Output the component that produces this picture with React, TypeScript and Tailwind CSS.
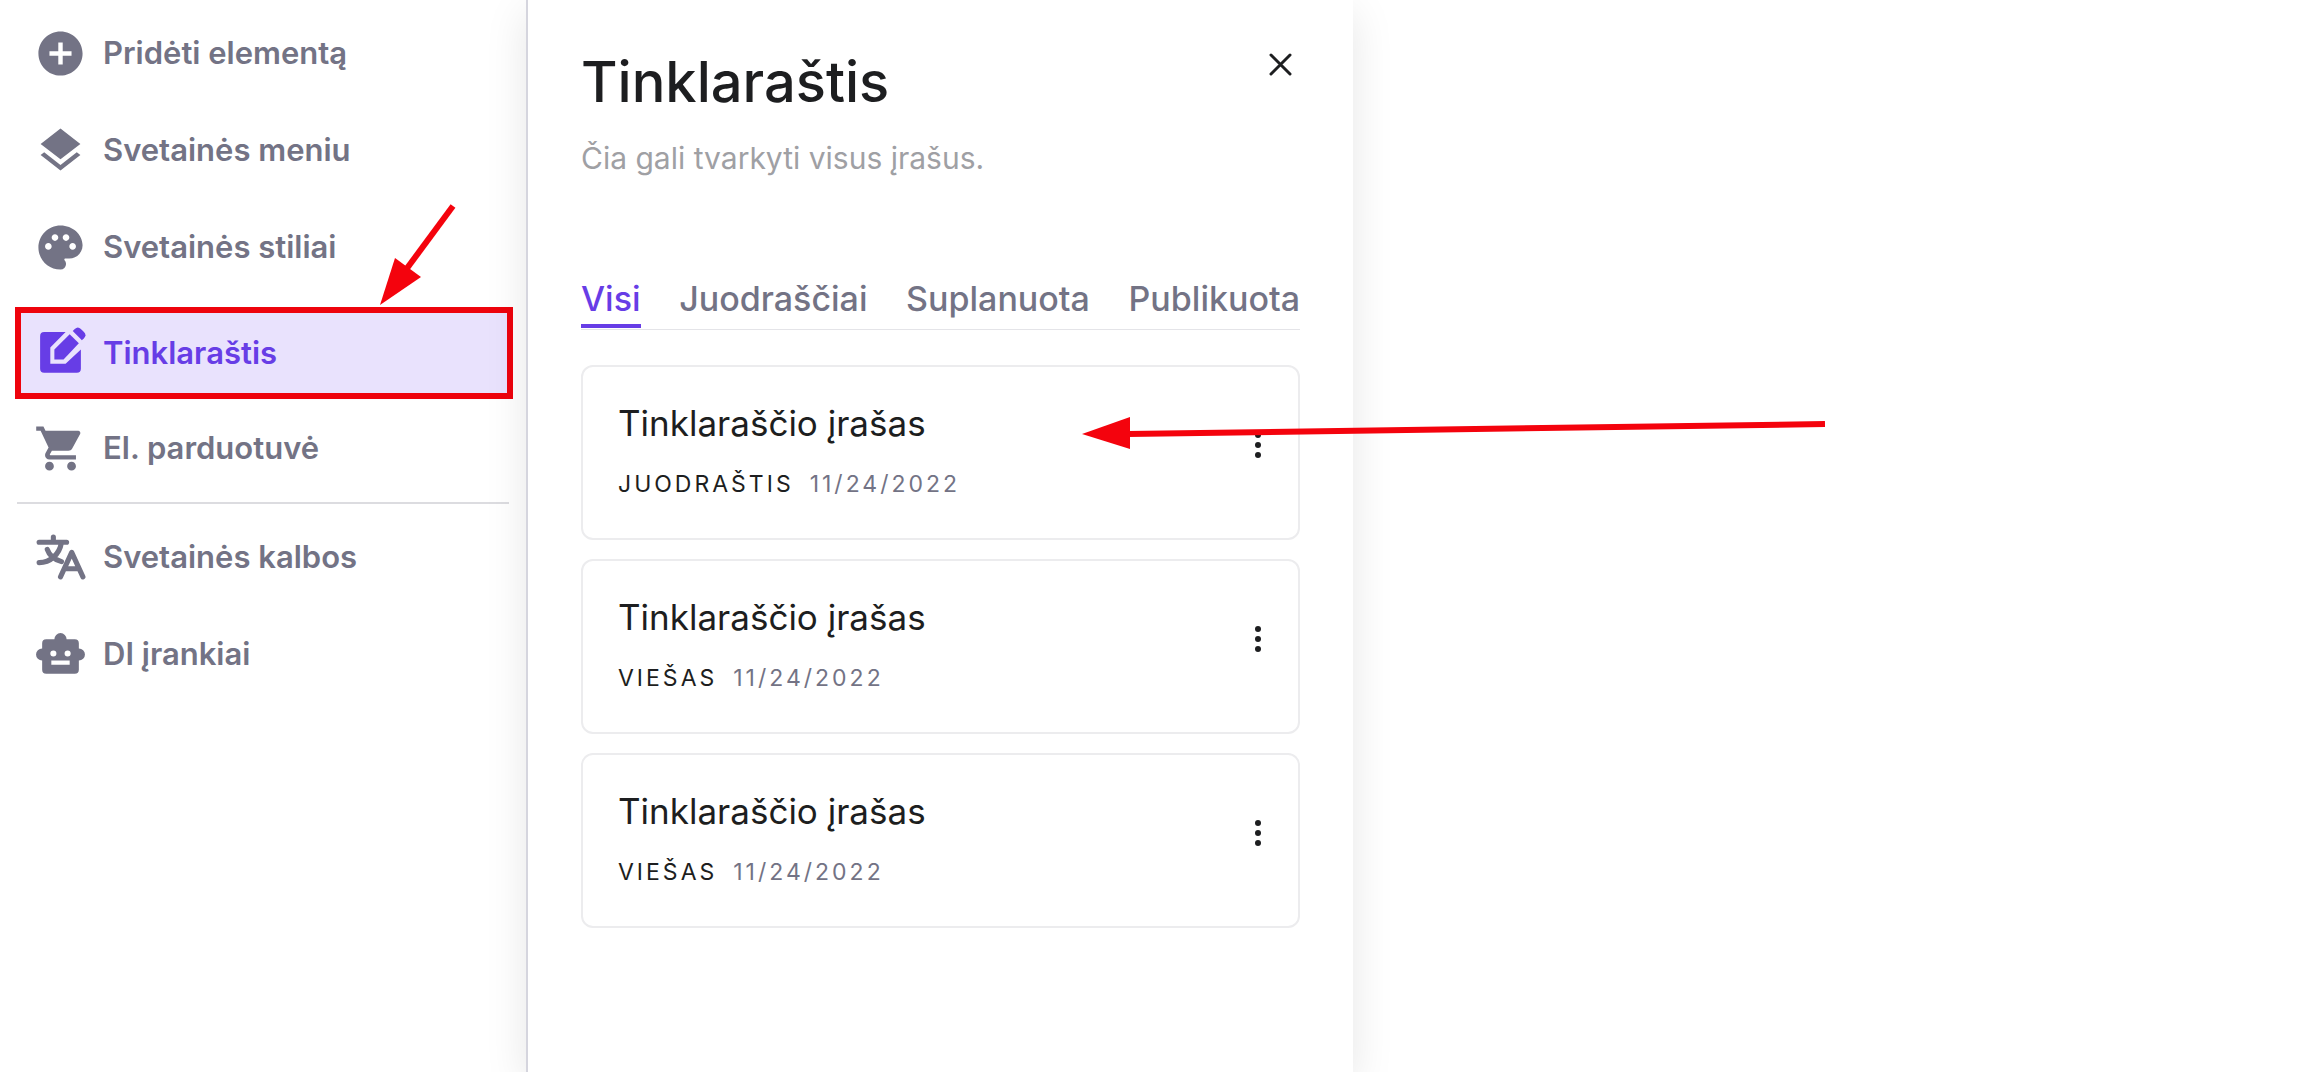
import type { ReactNode } from "react";
import { MdAddCircle, MdLayers, MdPalette, MdShoppingCart } from "react-icons/md";

const ICON = "size-[53px] shrink-0";

function EditSquareIcon() {
  return (
    <svg viewBox="0 0 52 52" className={ICON} aria-hidden="true">
      <path
        fill="currentColor"
        d="M10 5h21L16 20v16h15l15-14v19a4 4 0 0 1-4 4H10a4 4 0 0 1-4-4V9a4 4 0 0 1 4-4z"
      />
      <path fill="currentColor" d="M20 22 35 7l9 9-15 16h-9z" />
      <path fill="currentColor" d="m38 4 2-2q3-3 6 0l3 3q3 3 0 6l-2 2z" />
    </svg>
  );
}

function TranslateIcon() {
  return (
    <svg
      viewBox="0 0 52 52"
      className={ICON}
      fill="none"
      stroke="currentColor"
      strokeWidth="5"
      strokeLinecap="round"
      strokeLinejoin="round"
      aria-hidden="true"
    >
      <path d="M5 11h27M19 6v5M27 11c-2 12-11 20-22 20M13 18c2 6 7 10 14 12" />
      <path d="m26 45 11-24 11 24M30 37h14" />
    </svg>
  );
}

function RobotIcon() {
  return (
    <svg viewBox="0 0 52 52" className={ICON} aria-hidden="true">
      <path
        fill="currentColor"
        fillRule="evenodd"
        d="M20 11a6 6 0 0 1 12 0h8a4 4 0 0 1 4 4v5a6 6 0 0 1 0 12v9a4 4 0 0 1-4 4H12a4 4 0 0 1-4-4v-9a6 6 0 0 1 0-12v-5a4 4 0 0 1 4-4zM19 22a3 3 0 1 0 0 6 3 3 0 0 0 0-6zm14 0a3 3 0 1 0 0 6 3 3 0 0 0 0-6zM17 32v4h18v-4z"
      />
    </svg>
  );
}

const NAV_ITEMS: { label: string; icon: ReactNode }[] = [
  { label: "Pridėti elementą", icon: <MdAddCircle className={ICON} /> },
  { label: "Svetainės meniu", icon: <MdLayers className={ICON} /> },
  { label: "Svetainės stiliai", icon: <MdPalette className={ICON} /> },
  { label: "Tinklaraštis", icon: <EditSquareIcon /> },
  { label: "El. parduotuvė", icon: <MdShoppingCart className={ICON} /> },
];

const TOOL_ITEMS: { label: string; icon: ReactNode }[] = [
  { label: "Svetainės kalbos", icon: <TranslateIcon /> },
  { label: "DI įrankiai", icon: <RobotIcon /> },
];

const TABS = ["Visi", "Juodraščiai", "Suplanuota", "Publikuota"];

const POSTS = [
  { id: 1, title: "Tinklaraščio įrašas", status: "Juodraštis", date: "11/24/2022" },
  { id: 2, title: "Tinklaraščio įrašas", status: "Viešas", date: "11/24/2022" },
  { id: 3, title: "Tinklaraščio įrašas", status: "Viešas", date: "11/24/2022" },
];

function NavItem({ label, icon, active }: { label: string; icon: ReactNode; active?: boolean }) {
  return (
    <li className={active ? "pt-[11px]" : ""}>
      <button
        type="button"
        aria-current={active ? "page" : undefined}
        className={`flex w-full items-center gap-4 text-left text-[31px] font-semibold ${
          active
            ? "h-[92px] border-[6px] border-[#ee030d] bg-[#e9e2fd] px-[13px] text-[#673de6]"
            : "h-24 px-[19px] text-[#737385]"
        }`}
      >
        {icon}
        {label}
      </button>
    </li>
  );
}

function PostCard({ title, status, date }: { title: string; status: string; date: string }) {
  return (
    <li className="flex h-[175px] items-start justify-between rounded-xl border-2 border-[#ececee] pl-[35px] pr-[30px]">
      <div className="pt-[34px]">
        <h2 className="text-[35px] leading-[44px] text-[#1d1e20]">{title}</h2>
        <p className="mt-[25px] flex gap-4 text-[23px] leading-7 tracking-[3px]">
          <span className="uppercase text-[#1d1e20]">{status}</span>
          <span className="text-[#737385]">{date}</span>
        </p>
      </div>
      <button type="button" aria-label="Daugiau" className="mt-[62px] text-[#1d1e20]">
        <svg viewBox="0 0 20 32" className="h-8 w-5" fill="currentColor" aria-hidden="true">
          <circle cx="10" cy="6" r="3" />
          <circle cx="10" cy="16" r="3" />
          <circle cx="10" cy="26" r="3" />
        </svg>
      </button>
    </li>
  );
}

export default function App() {
  return (
    <div className="relative flex min-h-screen overflow-hidden bg-white font-['Inter',sans-serif]">
      {/* Sidebar */}
      <nav className="w-[526px] shrink-0 pl-[15px] pr-[13px] pt-[5px]">
        <ul className="flex flex-col gap-px">
          {NAV_ITEMS.map((item) => (
            <NavItem key={item.label} {...item} active={item.label === "Tinklaraštis"} />
          ))}
        </ul>
        <hr className="ml-0.5 mr-1 mb-[5px] mt-1.5 border-t-2 border-[#dcdce0]" />
        <ul className="flex flex-col gap-px">
          {TOOL_ITEMS.map((item) => (
            <NavItem key={item.label} {...item} />
          ))}
        </ul>
      </nav>

      {/* Blog panel */}
      <main className="w-[827px] shrink-0 border-l-2 border-[#d5d5de] bg-white px-[53px] shadow-[0_12px_40px_rgba(0,0,0,0.1)]">
        <header className="flex items-start justify-between pt-12">
          <h1 className="text-[56px] font-medium leading-[68px] text-[#1d1e20]">Tinklaraštis</h1>
          <button type="button" aria-label="Uždaryti" className="mr-[3px] text-[#1d1e20]">
            <svg
              viewBox="0 0 32 32"
              className="size-8"
              stroke="currentColor"
              strokeWidth="3"
              strokeLinecap="round"
              aria-hidden="true"
            >
              <path d="m6 7 19 19M25 7 6 26" />
            </svg>
          </button>
        </header>
        <p className="mt-5 text-[30px] leading-[44px] text-[#9fa0a4]">
          Čia gali tvarkyti visus įrašus.
        </p>

        <div role="tablist" className="mt-[95px] flex justify-between border-b border-[#e4e4e8]">
          {TABS.map((tab, i) => (
            <button
              key={tab}
              type="button"
              role="tab"
              aria-selected={i === 0}
              className={`mb-px border-b-4 pb-px text-[34px] font-medium leading-[48px] ${
                i === 0 ? "border-[#673de6] text-[#673de6]" : "border-transparent text-[#737385]"
              }`}
            >
              {tab}
            </button>
          ))}
        </div>

        <ul className="mt-[35px] flex flex-col gap-[19px]">
          {POSTS.map((post) => (
            <PostCard key={post.id} title={post.title} status={post.status} date={post.date} />
          ))}
        </ul>
      </main>

      {/* Arrows drawn over the page */}
      <svg
        className="pointer-events-none absolute left-0 top-0"
        width="1840"
        height="480"
        fill="#f4030d"
        stroke="#f4030d"
        aria-hidden="true"
      >
        <path d="M453 206 405 271" strokeWidth="6" />
        <path d="M380 305 395 258 421 277z" stroke="none" />
        <path d="M1825 424 1128 434" strokeWidth="6" />
        <path d="M1082 434 1130 417v32z" stroke="none" />
      </svg>
    </div>
  );
}
